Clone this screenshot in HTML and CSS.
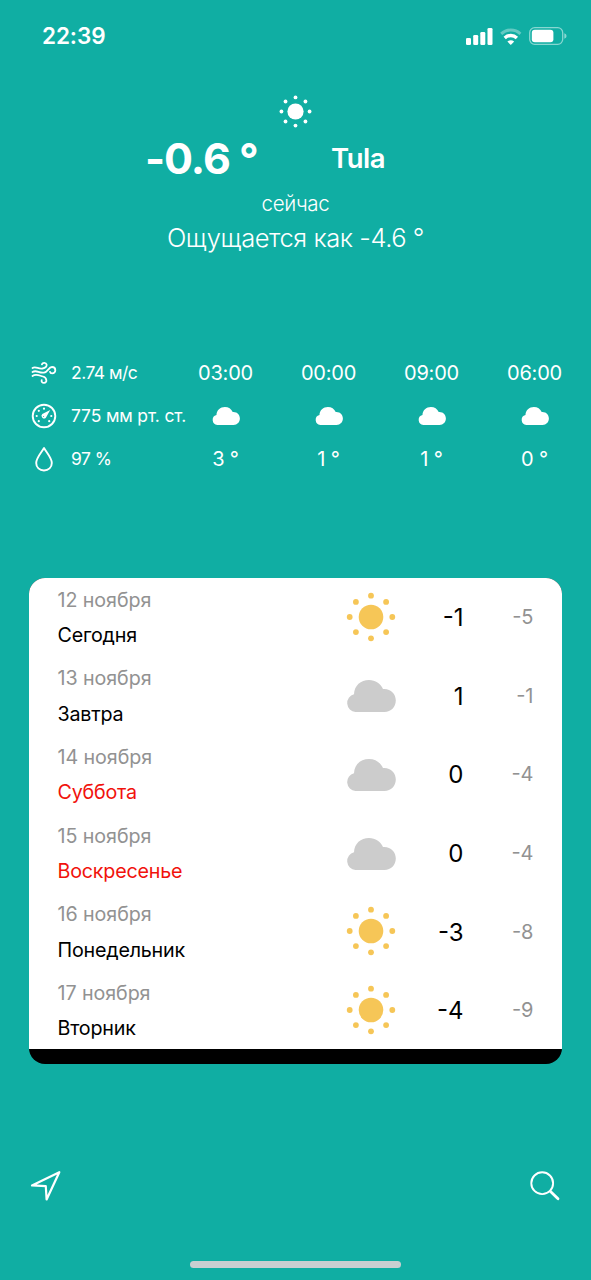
FILE: index.html
```html
<!DOCTYPE html>
<html lang="ru">
<head>
<meta charset="utf-8">
<title>Погода</title>
<link rel="stylesheet" href="styles.css">
</head>
<body>
<svg class="defs" width="0" height="0" aria-hidden="true">
  <symbol id="sun" viewBox="0 0 50 50">
    <circle cx="25" cy="25" r="12.3"/>
    <circle cx="25" cy="3.7" r="2.9"/><circle cx="25" cy="46.3" r="2.9"/>
    <circle cx="3.7" cy="25" r="2.9"/><circle cx="46.3" cy="25" r="2.9"/>
    <circle cx="9.9" cy="9.9" r="2.9"/><circle cx="40.1" cy="9.9" r="2.9"/>
    <circle cx="9.9" cy="40.1" r="2.9"/><circle cx="40.1" cy="40.1" r="2.9"/>
  </symbol>
  <symbol id="cloud" viewBox="0 0 50 32">
    <path d="M9.500 32A9 9 0 0 1 8 14.300C8.300 5.500 14.800 0 23 0C29.500 0 34.500 3.500 37 9C44.500 8.300 49.800 13.700 49.800 20.500C49.800 27 45 32 38.500 32Z"/>
  </symbol>
</svg>
<div class="screen">
  <header class="status">
    <span class="time">22:39</span>
    <svg class="status-icons" viewBox="0 0 101 20" width="101" height="20">
      <g fill="#fff">
        <rect x="0" y="12" width="5" height="7" rx="1.300"/>
        <rect x="7.200" y="9" width="5" height="10" rx="1.300"/>
        <rect x="14.300" y="6" width="5" height="13" rx="1.300"/>
        <rect x="21.500" y="2" width="5" height="17" rx="1.300"/>
      </g>
      <g fill="none" stroke="#fff" stroke-width="3">
        <path d="M35.200 7.800A14 14 0 0 1 54.400 7.800" opacity=".35"/>
        <path d="M38.700 11.900A9 9 0 0 1 50.900 11.900" stroke-width="3.400"/>
      </g>
      <path d="M44.800 19L41.400 15.600Q44.800 13 48.200 15.600Z" fill="#fff"/>
      <rect x="63.700" y="1.700" width="33" height="16.600" rx="5" fill="none" stroke="#fff" stroke-opacity=".5" stroke-width="1.300"/>
      <rect x="65.800" y="3.800" width="21.600" height="12.400" rx="3" fill="#fff"/>
      <path d="M98.300 7.300Q100.600 8 100.600 10Q100.600 12 98.300 12.700Z" fill="#fff" opacity=".5"/>
    </svg>
  </header>

  <section class="current">
    <svg class="sun-now"><use href="#sun"/></svg>
    <div class="headline">
      <div class="temp">-0.6 °</div>
      <div class="city">Tula</div>
    </div>
    <div class="now">сейчас</div>
    <div class="feels">Ощущается как -4.6 °</div>
  </section>

  <section class="details">
    <ul class="metrics">
      <li>
        <svg viewBox="0 0 26 26" width="26" height="26" fill="none" stroke="#fff" stroke-width="1.800" stroke-linecap="round">
          <path d="M1.500 8C5 5.800 7.500 9.600 11.500 8.500C14.500 7.900 16 6.400 15.600 4.500C15.100 2.400 11.700 2.100 10.900 4.400"/>
          <path d="M1.500 12C5.500 9.400 8 13.500 13 12.600C17 12 17.500 7 21 7C25.400 7 25.400 13.400 21.100 13.400C19.900 13.400 19.200 12.700 19 11.800"/>
          <path d="M1.500 16C5 13.500 8 15.500 12 16.500C16 17.500 16.600 22.800 13 22.800C11 22.800 10.200 21.400 10.700 20.200"/>
        </svg>
        <span class="wind">2.74 м/с</span>
      </li>
      <li>
        <svg viewBox="0 0 26 26" width="26" height="26" fill="#fff">
          <circle cx="13" cy="13" r="11.300" fill="none" stroke="#fff" stroke-width="1.900"/>
          <path d="M19.200 7L11.300 11.100A2.500 2.500 0 1 0 14.900 14.700Z"/>
          <circle cx="12.600" cy="13.400" r=".5" fill="#10aea3"/>
          <circle cx="13" cy="5.700" r="1.100"/><circle cx="7.800" cy="7.800" r="1.100"/>
          <circle cx="5.700" cy="13" r="1.100"/><circle cx="7.800" cy="18.200" r="1.100"/>
          <circle cx="18.200" cy="18.200" r="1.100"/><circle cx="20.300" cy="13" r="1.100"/>
        </svg>
        <span class="pressure">775 мм рт. ст.</span>
      </li>
      <li>
        <svg viewBox="0 0 26 26" width="26" height="26" fill="none" stroke="#fff" stroke-width="1.900">
          <path d="M13 2C10.500 6.500 5.200 12 5.200 16.900C5.200 21.500 8.500 24.500 13 24.500C17.500 24.500 20.800 21.500 20.800 16.900C20.800 12 15.500 6.500 13 2Z" stroke-linejoin="round"/>
        </svg>
        <span class="humidity">97 %</span>
      </li>
    </ul>
    <div class="hours">
      <div class="hour"><span>03:00</span><svg><use href="#cloud"/></svg><span>3 °</span></div>
      <div class="hour"><span>00:00</span><svg><use href="#cloud"/></svg><span>1 °</span></div>
      <div class="hour"><span>09:00</span><svg><use href="#cloud"/></svg><span>1 °</span></div>
      <div class="hour"><span>06:00</span><svg><use href="#cloud"/></svg><span>0 °</span></div>
    </div>
  </section>

  <section class="forecast">
    <div class="day"><div class="label"><span class="date">12 ноября</span><span class="name">Сегодня</span></div><svg class="sun"><use href="#sun"/></svg><span class="high">-1</span><span class="low">-5</span></div>
    <div class="day"><div class="label"><span class="date">13 ноября</span><span class="name">Завтра</span></div><svg class="cloud"><use href="#cloud"/></svg><span class="high">1</span><span class="low">-1</span></div>
    <div class="day weekend"><div class="label"><span class="date">14 ноября</span><span class="name">Суббота</span></div><svg class="cloud"><use href="#cloud"/></svg><span class="high">0</span><span class="low">-4</span></div>
    <div class="day weekend"><div class="label"><span class="date">15 ноября</span><span class="name">Воскресенье</span></div><svg class="cloud"><use href="#cloud"/></svg><span class="high">0</span><span class="low">-4</span></div>
    <div class="day"><div class="label"><span class="date">16 ноября</span><span class="name">Понедельник</span></div><svg class="sun"><use href="#sun"/></svg><span class="high">-3</span><span class="low">-8</span></div>
    <div class="day"><div class="label"><span class="date">17 ноября</span><span class="name">Вторник</span></div><svg class="sun"><use href="#sun"/></svg><span class="high">-4</span><span class="low">-9</span></div>
  </section>

  <nav class="toolbar">
    <svg viewBox="0 0 32 32" width="32" height="32" fill="none" stroke="#fff" stroke-width="2.200" stroke-linejoin="round">
      <path d="M29.300 2.200L2 15.400L15.800 16.200L16.600 29.500Z"/>
    </svg>
    <svg viewBox="0 0 32 32" width="32" height="32" fill="none" stroke="#fff" stroke-linecap="round">
      <circle cx="13.200" cy="13.200" r="10.900" stroke-width="1.900"/>
      <path d="M21.500 21.500L29 28.800" stroke-width="2.800"/>
    </svg>
  </nav>
  <div class="home-bar"></div>
</div>
</body>
</html>
```

FILE: styles.css
```css
* { box-sizing: border-box; }
body { margin: 0; background: #10aea3; font-family: Inter, "Noto Sans", sans-serif; color: #fff; }
.defs { display: block; position: absolute; }
.screen { width: 591px; height: 1280px; display: flex; flex-direction: column; overflow: hidden; white-space: nowrap; }
.status { height: 72px; flex: none; display: flex; justify-content: space-between; align-items: center; padding: 0 24px 0 42px; }
.time { font-size: 22.5px; font-weight: 600; letter-spacing: -.1px; margin-top: -2px; }
.status-icons { margin-top: -1px; }

.current { height: 282px; flex: none; display: flex; flex-direction: column; align-items: center; }
.sun-now { width: 33px; height: 33px; margin-top: 23px; fill: #fff; flex: none; }
.headline { display: grid; grid-template-columns: 110px 54px; column-gap: 76px; height: 60px; align-items: center; margin: 1px 0 0 145px; align-self: flex-start; }
.temp { font-size: 43px; font-weight: 700; letter-spacing: -1px; padding-bottom: 2px; }
.city { font-size: 27.5px; font-weight: 600; letter-spacing: -.5px; padding-bottom: 2px; }
.now { font-size: 20.5px; font-weight: 300; line-height: 30px; letter-spacing: -.3px; }
.feels { font-size: 25.5px; font-weight: 350; line-height: 38px; letter-spacing: -.45px; }

.details { height: 223.500px; flex: none; display: flex; }
.metrics { list-style: none; margin: 0; padding: 0 0 0 31px; width: 174px; flex: none; }
.metrics li { height: 43px; display: flex; align-items: center; gap: 14px; font-size: 17.5px; margin-top: -3px; margin-bottom: 3px; }
.metrics svg { flex: none; }
.wind { letter-spacing: -.5px; }
.pressure { letter-spacing: -.15px; }
.humidity { letter-spacing: -.5px; }
.hours { display: grid; grid-template-columns: repeat(4, 103px); }
.hour { display: grid; grid-template-rows: repeat(3, 43px); place-items: center; align-content: start; font-size: 20px; letter-spacing: -.2px; margin-top: -3px; }
.hour svg { width: 28px; height: 18px; fill: #fff; }

.forecast { width: 533.500px; height: 486.500px; flex: none; margin-left: 28.500px; background: #000; border-radius: 16px; overflow: hidden; }
.day { height: 78.600px; background: #fff; color: #000; display: grid; grid-template-columns: 288px 51px 67px 70px; align-items: center; padding-left: 29px; }
.label { display: flex; flex-direction: column; font-size: 19.7px; line-height: 35.500px; padding-top: 3px; letter-spacing: -.08px; }
.name { letter-spacing: -.2px; }
.date { color: #929292; }
.weekend .name { color: #f1120c; }
.day svg { width: 50px; }
.sun { height: 50px; fill: #f6c657; }
.cloud { height: 32px; fill: #ccc; margin-top: 2px; }
.high { font-size: 24px; text-align: right; padding-top: 2px; }
.low { font-size: 20px; text-align: right; color: #929292; padding-top: 1px; }

.toolbar { display: flex; justify-content: space-between; align-items: center; height: 122px; margin-top: 61px; padding: 0 30px 0 30px; flex: none; }
.home-bar { width: 211px; height: 7px; border-radius: 4px; background: #c9cfd1; margin: 14px 0 0 190px; flex: none; }
```
